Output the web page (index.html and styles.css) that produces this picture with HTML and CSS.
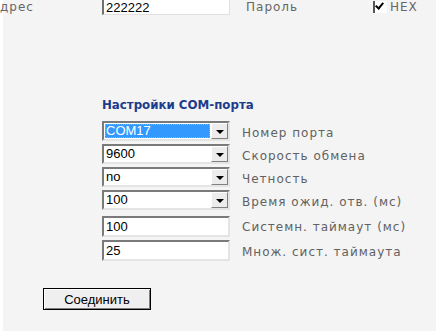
FILE: index.html
```html
<!DOCTYPE html>
<html>
<head>
<meta charset="utf-8">
<link rel="stylesheet" href="styles.css">
</head>
<body>
<div class="panel">
  <div class="toprow">
    <span class="tlabel addr">дрес</span>
    <span class="tinput"><span class="tval">222222</span></span>
    <span class="tlabel pass">Пароль</span>
    <span class="chk"><span class="chkbox"></span><span class="tlabel">HEX</span></span>
  </div>

  <div class="section">
    <h2 class="heading">Настройки COM-порта</h2>
    <div class="form">
      <div class="select focused"><span class="val"><span class="sel">COM17</span></span><span class="btn"><span class="tri"></span></span></div>
      <span class="label">Номер порта</span>

      <div class="select"><span class="val">9600</span><span class="btn"><span class="tri"></span></span></div>
      <span class="label">Скорость обмена</span>

      <div class="select"><span class="val">no</span><span class="btn"><span class="tri"></span></span></div>
      <span class="label">Четность</span>

      <div class="select"><span class="val">100</span><span class="btn"><span class="tri"></span></span></div>
      <span class="label">Время ожид. отв. (мс)</span>

      <div class="input first">100</div>
      <span class="label">Системн. таймаут (мс)</span>

      <div class="input">25</div>
      <span class="label">Множ. сист. таймаута</span>
    </div>
  </div>

  <div class="actions">
    <button class="button">Соединить</button>
  </div>
</div>
</body>
</html>
```
FILE: styles.css
```css
html, body {
  margin: 0;
  padding: 0;
  background: #ffffff;
}
body {
  width: 442px;
  height: 336px;
  overflow: hidden;
}
.panel {
  margin-left: 3px;
  width: 433px;
  height: 331px;
  background: #f4f4f4;
  display: flex;
  flex-direction: column;
}
.toprow {
  height: 15px;
  display: flex;
  align-items: flex-end;
  margin-left: -3px;
  font-family: "DejaVu Sans", Verdana, sans-serif;
}
.tlabel {
  font-size: 12px;
  color: #666;
  letter-spacing: 1px;
  line-height: 15px;
}
.addr { width: 102px; }
.tinput {
  width: 128px;
  height: 15px;
  box-sizing: border-box;
  background: #fff;
  border-left: 2px solid #707070;
  border-bottom: 1px solid #e0e0e0;
  border-right: 1px solid #e0e0e0;
  overflow: hidden;
  position: relative;
}
.tval {
  position: absolute;
  left: 2px;
  bottom: -1px;
  font-family: "Liberation Sans", Arial, sans-serif;
  font-size: 13px;
  line-height: 15px;
  color: #000;
}
.pass { margin-left: 16px; width: 127px; }
.chk { display: flex; align-items: flex-end; gap: 3px; }
.chkbox {
  width: 12px;
  height: 12px;
  background: #fff;
  border-left: 2px solid #555;
  position: relative;
  margin-bottom: 2px;
}
.chkbox::after {
  content: "";
  position: absolute;
  left: 2px;
  top: 0px;
  width: 3px;
  height: 6px;
  border-right: 2px solid #000;
  border-bottom: 2px solid #000;
  transform: rotate(40deg);
}
.section {
  margin-top: 83px;
  margin-left: 99px;
}
.heading {
  margin: 0 0 9px 0;
  font-family: "DejaVu Sans", Verdana, sans-serif;
  font-weight: bold;
  font-size: 11.8px;
  line-height: 14px;
  color: #1c3c8c;
}
.form {
  display: grid;
  grid-template-columns: 128px auto;
  column-gap: 12px;
  row-gap: 3px;
  align-items: center;
}
.label {
  font-family: "DejaVu Sans", Verdana, sans-serif;
  font-size: 12px;
  letter-spacing: 1px;
  color: #626262;
  padding-top: 3px;
}
.select {
  height: 20px;
  box-sizing: border-box;
  border: 2px solid;
  border-color: #7a7a7a #e4e4e4 #e4e4e4 #7a7a7a;
  background: #fff;
  display: flex;
  font-family: "Liberation Sans", Arial, sans-serif;
  font-size: 13px;
  color: #000;
}
.select .val {
  flex: 1;
  display: flex;
  padding-left: 2px;
  line-height: 16px;
}
.select.focused .val { padding: 1px; line-height: 14px; }
.sel {
  flex: 1;
  background: #3399ff;
  color: #fff;
  outline: 1px dotted #ff9933;
  outline-offset: -1px;
  padding-left: 1px;
  line-height: 14px;
}
.btn {
  width: 17px;
  box-sizing: border-box;
  background: #ececec;
  border: 1px solid;
  border-color: #ffffff #808080 #808080 #ffffff;
  display: flex;
  align-items: center;
  justify-content: center;
}
.tri {
  width: 0;
  height: 0;
  border-left: 4px solid transparent;
  border-right: 4px solid transparent;
  border-top: 4px solid #000;
  margin-top: 1px;
}
.input {
  height: 21px;
  box-sizing: border-box;
  border: 2px solid;
  border-color: #7a7a7a #e4e4e4 #e4e4e4 #7a7a7a;
  background: #fff;
  font-family: "Liberation Sans", Arial, sans-serif;
  font-size: 13px;
  line-height: 17px;
  padding-left: 2px;
  color: #000;
}
.input.first { margin-top: 3px; }
.actions {
  margin-top: 27px;
  margin-left: 40px;
}
.button {
  width: 108px;
  height: 22px;
  box-sizing: border-box;
  border: 1px solid #000;
  background: #efefef;
  box-shadow: inset 1px 1px 0 #fff, inset -1px -1px 0 #808080;
  font-family: "Liberation Sans", Arial, sans-serif;
  font-size: 13px;
  color: #000;
  padding: 0;
}
```
